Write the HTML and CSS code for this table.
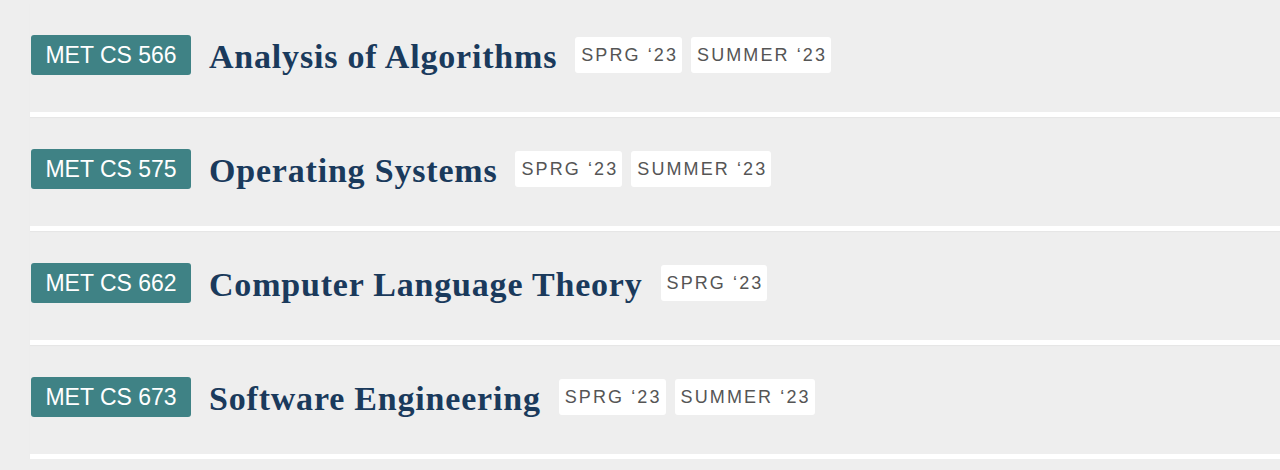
FILE: index.html
```html
<!DOCTYPE html>
<html lang="en">
<head>
<meta charset="utf-8">
<title>Courses</title>
<link rel="stylesheet" href="styles.css">
</head>
<body>
<ul class="courses">
  <li class="course">
    <span class="code">MET CS 566</span>
    <h2 class="title">Analysis of Algorithms</h2>
    <span class="term">SPRG ‘23</span>
    <span class="term">SUMMER ‘23</span>
  </li>
  <li class="course">
    <span class="code">MET CS 575</span>
    <h2 class="title">Operating Systems</h2>
    <span class="term">SPRG ‘23</span>
    <span class="term">SUMMER ‘23</span>
  </li>
  <li class="course">
    <span class="code">MET CS 662</span>
    <h2 class="title">Computer Language Theory</h2>
    <span class="term">SPRG ‘23</span>
  </li>
  <li class="course">
    <span class="code">MET CS 673</span>
    <h2 class="title">Software Engineering</h2>
    <span class="term">SPRG ‘23</span>
    <span class="term">SUMMER ‘23</span>
  </li>
</ul>
</body>
</html>
```
FILE: styles.css
```css
html, body {
  margin: 0;
  padding: 0;
  background: #eeeeee;
}
body {
  font-family: "Liberation Sans", Arial, sans-serif;
  overflow: hidden;
}
.courses {
  list-style: none;
  margin: 0;
  padding: 3px 0 0 30px;
}
.course {
  display: flex;
  align-items: center;
  padding: 32px 0 37px 1px;
  border-bottom: 5px solid #ffffff;
  box-shadow: 0 1px 1px rgba(0,0,0,0.03);
}
.code {
  box-sizing: border-box;
  width: 160px;
  height: 40px;
  display: flex;
  align-items: center;
  justify-content: center;
  background: #3f8285;
  color: #ffffff;
  font-size: 23px;
  border-radius: 3px;
  margin-right: 18px;
}
.title {
  margin: 0 18px 0 0;
  font-family: "Liberation Serif", "Times New Roman", serif;
  font-weight: bold;
  font-size: 34px;
  color: #1a3a5c;
  line-height: 36px;
  height: 36px;
  padding-top: 4px;
  letter-spacing: 0.8px;
}
.term {
  height: 36px;
  display: flex;
  align-items: center;
  padding: 0 4px 0 6px;
  background: #ffffff;
  color: #555555;
  font-size: 18px;
  letter-spacing: 2.1px;
  border-radius: 3px;
  margin-right: 9px;
}
```
